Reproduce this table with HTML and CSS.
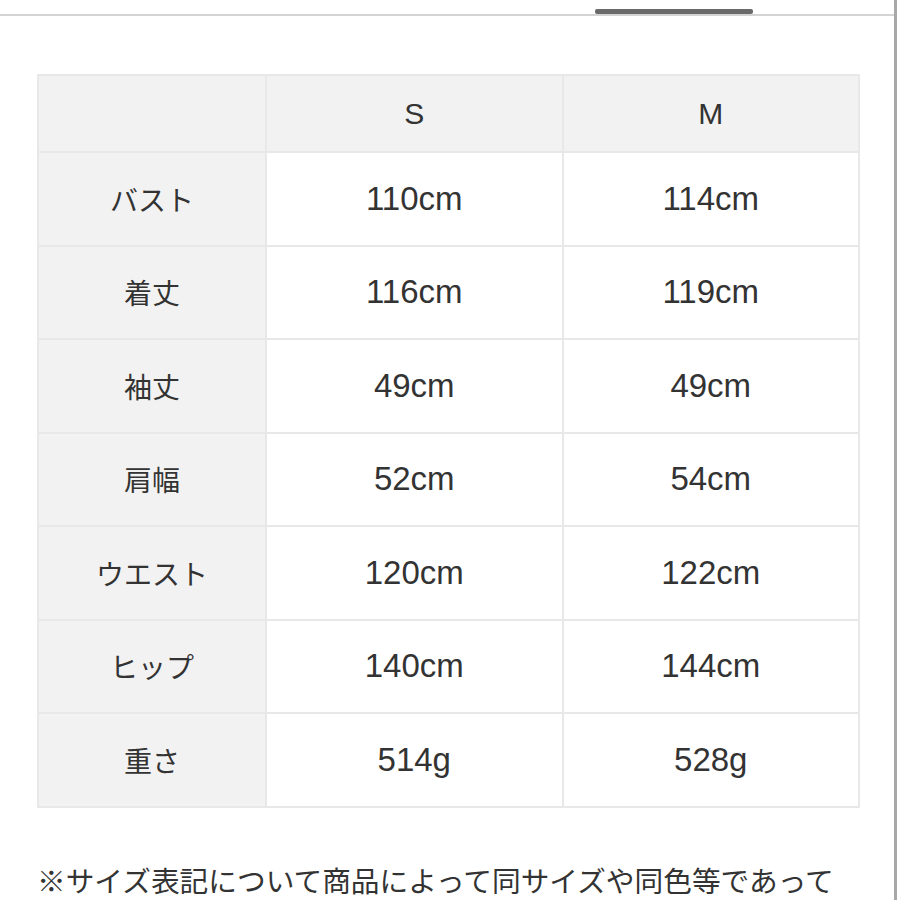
FILE: index.html
```html
<!DOCTYPE html>
<html lang="ja">
<head>
<meta charset="utf-8">
<link rel="stylesheet" href="styles.css">
</head>
<body>
<div class="page">
  <div class="tabs"><div class="tab-indicator"></div></div>
  <table class="size-table">
    <tr class="head"><th></th><th>S</th><th>M</th></tr>
    <tr><th>バスト</th><td>110cm</td><td>114cm</td></tr>
    <tr><th>着丈</th><td>116cm</td><td>119cm</td></tr>
    <tr><th>袖丈</th><td>49cm</td><td>49cm</td></tr>
    <tr><th>肩幅</th><td>52cm</td><td>54cm</td></tr>
    <tr><th>ウエスト</th><td>120cm</td><td>122cm</td></tr>
    <tr><th>ヒップ</th><td>140cm</td><td>144cm</td></tr>
    <tr><th>重さ</th><td>514g</td><td>528g</td></tr>
  </table>
  <p class="note">※サイズ表記について商品によって同サイズや同色等であって</p>
</div>
</body>
</html>
```
FILE: styles.css
```css
html, body {
  margin: 0;
  padding: 0;
  background: #fff;
}
.page {
  width: 894px;
  height: 900px;
  border-right: 3px solid #a8a8a8;
  overflow: hidden;
  font-family: "Liberation Sans", "Noto Sans CJK JP", sans-serif;
  color: #333;
}
.tabs {
  height: 14px;
  border-bottom: 2px solid #d4d4d4;
  display: flex;
  align-items: flex-end;
}
.tab-indicator {
  margin-left: 595px;
  width: 158px;
  height: 5px;
  background: #6a6a6a;
  border-radius: 2px;
}
.size-table {
  margin: 58px 0 0 37px;
  width: 823px;
  border-collapse: collapse;
  border: 2px solid #e4e4e4;
  table-layout: fixed;
}
.size-table th, .size-table td {
  border: 2px solid #e8e8e8;
  text-align: center;
  vertical-align: middle;
  font-weight: normal;
  height: 91.5px;
  padding: 0;
}
.size-table td {
  font-size: 33px;
  background: #fff;
}
.size-table th {
  background: #f2f2f2;
  font-family: "Noto Sans CJK JP", sans-serif;
  font-size: 28px;
  width: 226px;
}
.size-table tr.head th {
  height: 75px;
  font-family: "Liberation Sans", sans-serif;
  font-size: 30px;
}
.size-table tr.head th + th {
  width: auto;
}
.note {
  margin: 54px 0 0 37px;
  font-family: "Noto Sans CJK JP", sans-serif;
  font-size: 28.7px;
  line-height: 36px;
  white-space: nowrap;
  color: #333;
}
```
